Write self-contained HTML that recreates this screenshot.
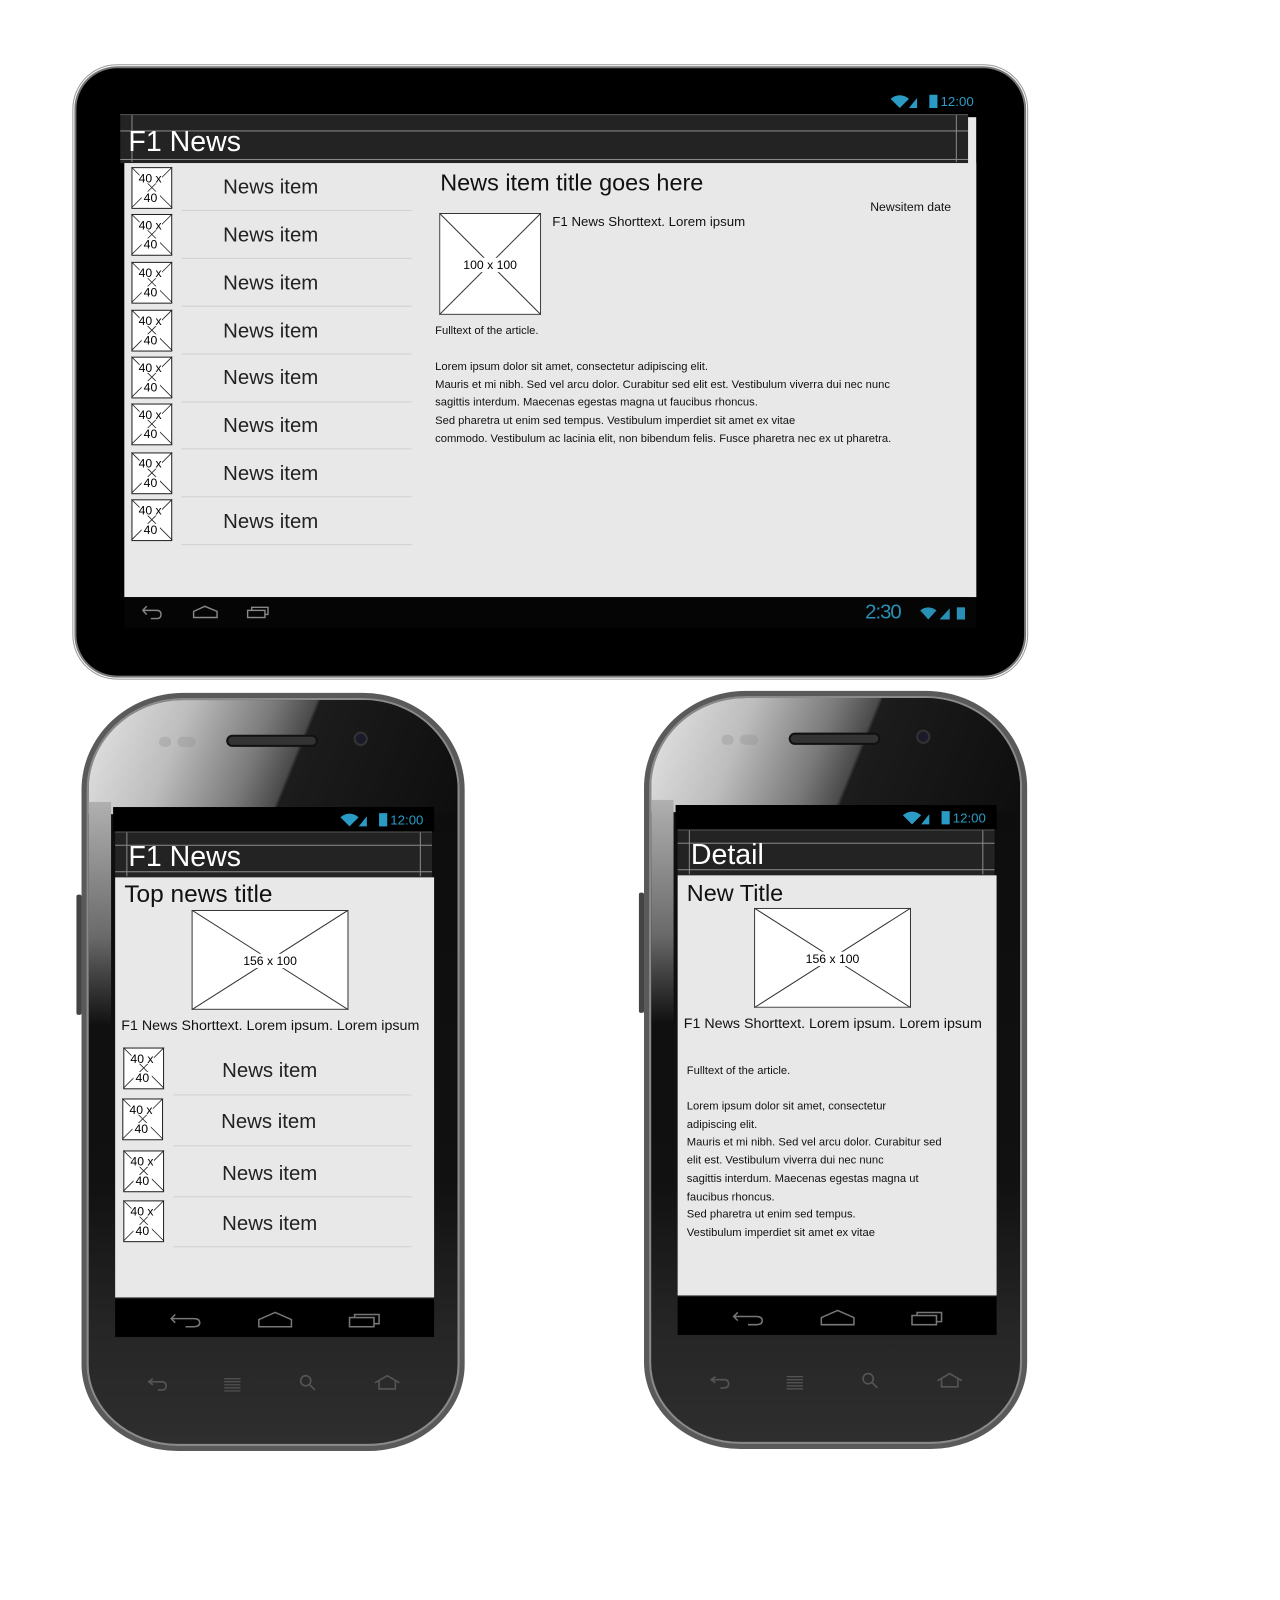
<!DOCTYPE html>
<html><head><meta charset="utf-8"><style>
*{margin:0;padding:0;box-sizing:border-box}
body{width:1280px;height:1600px;background:#fff;position:relative;overflow:hidden;font-family:"Liberation Sans",sans-serif}
#w{position:absolute;left:0;top:0;width:1260px;height:1570px;transform:scale(1.019);transform-origin:0 0}
.a{position:absolute}
.t{position:absolute;white-space:nowrap;color:#111}
.bar{background:#232323;border-top:1px solid #555}
.hl{position:absolute;height:1px;background:#8a8a8a}
.vl{position:absolute;width:1px;background:#8a8a8a}
.ni{font-size:20px;color:#222}
.sm{font-size:11px;line-height:17.7px;color:#111}
.phone{position:absolute;width:376px;height:744px;border-radius:100px 100px 95px 95px/95px 95px 85px 85px;background:#5a5a5a;}
.phone .in{position:absolute;left:5px;top:5px;right:5px;bottom:5px;border-radius:95px 95px 90px 90px/90px 90px 80px 80px;background:linear-gradient(180deg,#0c0c0c 0%,#111 65%,#262626 85%,#2e2e2e 100%);border:2px solid #8a8a8a;overflow:hidden}
.gloss{position:absolute;left:0;top:0;width:100%;height:112px;background:linear-gradient(112deg,#e6e6e6 0%,#bdbdbd 25%,#7a7a7a 45%,#4a4a4a 55%,#1c1c1c 56%,#0e0e0e 100%)}
.side{position:absolute;left:0;top:100px;width:22px;height:220px;background:linear-gradient(180deg,#b0b0b0,#6a6a6a 60%,rgba(20,20,20,0))}
</style></head><body><div id="w">

<!-- TABLET -->
<div class="a" style="left:73px;top:65px;width:934px;height:600px;border-radius:42px;background:#000;border:2px solid #777;box-shadow:0 0 0 1px #fff,0 0 0 2px #999"></div>
<div class="t" style="left:873px;top:91px;font-size:13px;color:#2a9bc5">
<svg width="50" height="16" style="vertical-align:-3px"><path d="M1 6 Q10 -1 19 6 L10 15Z" fill="#2a9bc5"/><path d="M19 15 L27 5 L27 15Z" fill="#2a9bc5"/><rect x="39" y="2" width="8" height="13" fill="#2a9bc5"/></svg>12:00</div>
<div class="a bar" style="left:118px;top:112px;width:832px;height:48px"></div>
<div class="hl" style="left:118px;top:128px;width:832px"></div>
<div class="hl" style="left:118px;top:156px;width:832px"></div>
<div class="vl" style="left:129px;top:113px;height:46px"></div>
<div class="vl" style="left:938px;top:113px;height:46px"></div>
<div class="t" style="left:126px;top:123px;font-size:28px;color:#fff">F1 News</div>
<div class="a" style="left:950px;top:115px;width:8px;height:471px;background:#e8e8e8"></div>
<div class="a" style="left:122px;top:160px;width:836px;height:426px;background:#e8e8e8"></div>
<div class="a" style="left:122px;top:586px;width:836px;height:30px;background:#050505"></div>
<svg class="a" style="left:136px;top:592px" width="130" height="18"><path d="M4 7 L8 3 M4 7 L8 11 M4 7 H18 Q22 7 22 11 Q22 15 18 15 H12" stroke="#888" fill="none" stroke-width="1.4"/><path d="M54 14 V8 L65 3 L77 8 V14Z" stroke="#888" fill="none" stroke-width="1.4"/><rect x="107" y="7" width="17" height="7" stroke="#888" fill="none" stroke-width="1.4"/><path d="M111 7 V4 H127 V11 H124" stroke="#888" fill="none" stroke-width="1.4"/></svg>
<div class="t" style="left:849px;top:590px;font-size:20px;color:#2a8fb5;letter-spacing:-1px">2:30</div>
<svg class="a" style="left:902px;top:594px" width="48" height="16"><path d="M1 5 Q9 -1 17 5 L9 14Z" fill="#2a8fb5"/><path d="M20 14 L30 3 V14Z" fill="#2a8fb5"/><rect x="37" y="2" width="8" height="12" fill="#2a8fb5"/></svg>

<div class="t" style="left:432px;top:166px;font-size:23px">News item title goes here</div>
<div class="t" style="left:854px;top:196px;font-size:12px">Newsitem date</div>
<div class="t" style="left:542px;top:210px;font-size:13px">F1 News Shorttext. Lorem ipsum</div>
<svg class="a" style="left:431px;top:209px" width="100" height="100"><rect x="0.5" y="0.5" width="99" height="99" fill="#fff" stroke="#333"/><path d="M0 0L100 100M100 0L0 100" stroke="#333"/><rect x="22" y="44" width="56" height="14" fill="#fff"/><text x="50" y="55" font-size="12" text-anchor="middle" font-family="Liberation Sans">100 x 100</text></svg>
<div class="t sm" style="left:427px;top:317px">Fulltext of the article.</div>
<div class="t sm" style="left:427px;top:352px">Lorem ipsum dolor sit amet, consectetur adipiscing elit.<br>Mauris et mi nibh. Sed vel arcu dolor. Curabitur sed elit est. Vestibulum viverra dui nec nunc<br>sagittis interdum. Maecenas egestas magna ut faucibus rhoncus.<br>Sed pharetra ut enim sed tempus. Vestibulum imperdiet sit amet ex vitae<br>commodo. Vestibulum ac lacinia elit, non bibendum felis. Fusce pharetra nec ex ut pharetra.</div>

<!-- PHONE 1 -->
<div class="phone" style="left:80px;top:680px"><div class="in"><div class="gloss"></div><div class="side"></div></div>
<div class="a" style="left:-5px;top:198px;width:5px;height:118px;background:#444;border-radius:2px"></div>
<div class="a" style="left:142px;top:41px;width:90px;height:12px;border-radius:6px;background:#333;border:2px solid #111"></div>
<div class="a" style="left:267px;top:38px;width:14px;height:14px;border-radius:7px;background:#1a1a2a;border:2px solid #333"></div>
<div class="a" style="left:76px;top:43px;width:12px;height:10px;border-radius:5px;background:rgba(150,150,150,.4)"></div>
<div class="a" style="left:94px;top:43px;width:18px;height:10px;border-radius:5px;background:rgba(150,150,150,.4)"></div>
<svg class="a" style="left:60px;top:665px" width="260" height="24"><path d="M10 8 L6 11 L10 14 M6 11 H19 Q23 11 23 15 Q23 19 19 19 H15" stroke="#555" fill="none" stroke-width="1.6"/><path d="M80 8 H96 M80 11 H96 M80 14 H96 M80 17 H96 M80 20 H96" stroke="#555" stroke-width="1.2"/><circle cx="160" cy="10" r="5" stroke="#555" fill="none" stroke-width="1.6"/><path d="M164 14 L169 19" stroke="#555" stroke-width="1.6"/><path d="M228 12 L240 5 L252 12 M232 10 V18 H248 V10" stroke="#555" fill="none" stroke-width="1.6"/></svg>
</div>
<!-- PHONE 2 -->
<div class="phone" style="left:632px;top:678px"><div class="in"><div class="gloss"></div><div class="side"></div></div>
<div class="a" style="left:-5px;top:198px;width:5px;height:118px;background:#444;border-radius:2px"></div>
<div class="a" style="left:142px;top:41px;width:90px;height:12px;border-radius:6px;background:#333;border:2px solid #111"></div>
<div class="a" style="left:267px;top:38px;width:14px;height:14px;border-radius:7px;background:#1a1a2a;border:2px solid #333"></div>
<div class="a" style="left:76px;top:43px;width:12px;height:10px;border-radius:5px;background:rgba(150,150,150,.4)"></div>
<div class="a" style="left:94px;top:43px;width:18px;height:10px;border-radius:5px;background:rgba(150,150,150,.4)"></div>
<svg class="a" style="left:60px;top:665px" width="260" height="24"><path d="M10 8 L6 11 L10 14 M6 11 H19 Q23 11 23 15 Q23 19 19 19 H15" stroke="#555" fill="none" stroke-width="1.6"/><path d="M80 8 H96 M80 11 H96 M80 14 H96 M80 17 H96 M80 20 H96" stroke="#555" stroke-width="1.2"/><circle cx="160" cy="10" r="5" stroke="#555" fill="none" stroke-width="1.6"/><path d="M164 14 L169 19" stroke="#555" stroke-width="1.6"/><path d="M228 12 L240 5 L252 12 M232 10 V18 H248 V10" stroke="#555" fill="none" stroke-width="1.6"/></svg>
</div>

<!-- phone1 screen -->
<div class="a" style="left:111px;top:792px;width:315px;height:24px;background:#000"></div>
<div class="t" style="left:333px;top:796px;font-size:13px;color:#2a9bc5"><svg width="50" height="16" style="vertical-align:-3px"><path d="M1 6 Q10 -1 19 6 L10 15Z" fill="#2a9bc5"/><path d="M19 15 L27 5 L27 15Z" fill="#2a9bc5"/><rect x="39" y="2" width="8" height="13" fill="#2a9bc5"/></svg>12:00</div>
<div class="a bar" style="left:113px;top:816px;width:311px;height:45px"></div>
<div class="hl" style="left:113px;top:829px;width:311px"></div>
<div class="hl" style="left:113px;top:855px;width:311px"></div>
<div class="vl" style="left:124px;top:817px;height:43px"></div>
<div class="vl" style="left:412px;top:817px;height:43px"></div>
<div class="t" style="left:126px;top:825px;font-size:28px;color:#fff">F1 News</div>
<div class="a" style="left:113px;top:861px;width:313px;height:412px;background:#e8e8e8"></div>
<div class="a" style="left:113px;top:1273px;width:313px;height:39px;background:#000;border-top:1px solid #888"></div>
<svg class="a" style="left:160px;top:1283px" width="220" height="22"><path d="M12 7 L8 11 L12 15 M8 11 H30 Q36 11 36 15 Q36 19 30 19 H22" stroke="#777" fill="none" stroke-width="1.5"/><path d="M94 19 V12 L110 5 L126 12 V19Z" stroke="#777" fill="none" stroke-width="1.5"/><rect x="183" y="10" width="24" height="9" stroke="#777" fill="none" stroke-width="1.5"/><path d="M188 10 V7 H212 V16 H207" stroke="#777" fill="none" stroke-width="1.5"/></svg>
<div class="t" style="left:122px;top:864px;font-size:24px">Top news title</div>
<svg class="a" style="left:188px;top:893px" width="154" height="98"><rect x="0.5" y="0.5" width="153" height="97" fill="#fff" stroke="#333"/><path d="M0 0L154 98M154 0L0 98" stroke="#333"/><rect x="48" y="43" width="58" height="14" fill="#fff"/><text x="77" y="54" font-size="12" text-anchor="middle" font-family="Liberation Sans">156 x 100</text></svg>
<div class="t" style="left:119px;top:998px;font-size:14px">F1 News Shorttext. Lorem ipsum. Lorem ipsum</div>

<!-- phone2 screen -->
<div class="a" style="left:663px;top:790px;width:315px;height:24px;background:#000"></div>
<div class="t" style="left:885px;top:794px;font-size:13px;color:#2a9bc5"><svg width="50" height="16" style="vertical-align:-3px"><path d="M1 6 Q10 -1 19 6 L10 15Z" fill="#2a9bc5"/><path d="M19 15 L27 5 L27 15Z" fill="#2a9bc5"/><rect x="39" y="2" width="8" height="13" fill="#2a9bc5"/></svg>12:00</div>
<div class="a bar" style="left:665px;top:814px;width:311px;height:45px"></div>
<div class="hl" style="left:665px;top:827px;width:311px"></div>
<div class="hl" style="left:665px;top:853px;width:311px"></div>
<div class="vl" style="left:676px;top:815px;height:43px"></div>
<div class="vl" style="left:964px;top:815px;height:43px"></div>
<div class="t" style="left:678px;top:823px;font-size:28px;color:#fff">Detail</div>
<div class="a" style="left:665px;top:859px;width:313px;height:412px;background:#e8e8e8"></div>
<div class="a" style="left:665px;top:1271px;width:313px;height:39px;background:#000;border-top:1px solid #888"></div>
<svg class="a" style="left:712px;top:1281px" width="220" height="22"><path d="M12 7 L8 11 L12 15 M8 11 H30 Q36 11 36 15 Q36 19 30 19 H22" stroke="#777" fill="none" stroke-width="1.5"/><path d="M94 19 V12 L110 5 L126 12 V19Z" stroke="#777" fill="none" stroke-width="1.5"/><rect x="183" y="10" width="24" height="9" stroke="#777" fill="none" stroke-width="1.5"/><path d="M188 10 V7 H212 V16 H207" stroke="#777" fill="none" stroke-width="1.5"/></svg>
<div class="t" style="left:674px;top:863px;font-size:23px">New Title</div>
<svg class="a" style="left:740px;top:891px" width="154" height="98"><rect x="0.5" y="0.5" width="153" height="97" fill="#fff" stroke="#333"/><path d="M0 0L154 98M154 0L0 98" stroke="#333"/><rect x="48" y="43" width="58" height="14" fill="#fff"/><text x="77" y="54" font-size="12" text-anchor="middle" font-family="Liberation Sans">156 x 100</text></svg>
<div class="t" style="left:671px;top:996px;font-size:14px">F1 News Shorttext. Lorem ipsum. Lorem ipsum</div>
<div class="t sm" style="left:674px;top:1043px">Fulltext of the article.</div>
<div class="t sm" style="left:674px;top:1078px">Lorem ipsum dolor sit amet, consectetur<br>adipiscing elit.<br>Mauris et mi nibh. Sed vel arcu dolor. Curabitur sed<br>elit est. Vestibulum viverra dui nec nunc<br>sagittis interdum. Maecenas egestas magna ut<br>faucibus rhoncus.<br>Sed pharetra ut enim sed tempus.<br>Vestibulum imperdiet sit amet ex vitae</div>

<svg class="a" style="left:0;top:0" width="1250" height="1563">
<defs><g id="ic"><rect x="0.5" y="0.5" width="39" height="40" fill="#fff" stroke="#222"/><path d="M0 0L40 40M40 0L0 40" stroke="#222" stroke-width="0.8"/><rect x="8" y="5" width="22" height="11" fill="#fff"/><rect x="10" y="24" width="18" height="12" fill="#fff"/><text x="7" y="15" font-size="12" font-family="Liberation Sans">40 x</text><text x="12" y="34" font-size="12" font-family="Liberation Sans">40</text></g></defs>
<use href="#ic" x="129" y="164"/><use href="#ic" x="129" y="210"/><use href="#ic" x="129" y="257"/><use href="#ic" x="129" y="304"/><use href="#ic" x="129" y="350"/><use href="#ic" x="129" y="396"/><use href="#ic" x="129" y="444"/><use href="#ic" x="129" y="490"/>
<use href="#ic" x="121" y="1028"/><use href="#ic" x="120" y="1078"/><use href="#ic" x="121" y="1129"/><use href="#ic" x="121" y="1178"/>
<g fill="#d0d0d0"><rect x="178" y="206" width="226" height="1"/><rect x="178" y="253" width="226" height="1"/><rect x="178" y="300" width="226" height="1"/><rect x="178" y="347" width="226" height="1"/><rect x="178" y="394" width="226" height="1"/><rect x="178" y="440" width="226" height="1"/><rect x="178" y="487" width="226" height="1"/><rect x="178" y="534" width="226" height="1"/>
<rect x="170" y="1074" width="234" height="1"/><rect x="170" y="1124" width="234" height="1"/><rect x="170" y="1174" width="234" height="1"/><rect x="170" y="1223" width="234" height="1"/></g>
</svg>
<div class="t ni" style="left:219px;top:173px">News item</div>
<div class="t ni" style="left:219px;top:220px">News item</div>
<div class="t ni" style="left:219px;top:267px">News item</div>
<div class="t ni" style="left:219px;top:314px">News item</div>
<div class="t ni" style="left:219px;top:360px">News item</div>
<div class="t ni" style="left:219px;top:407px">News item</div>
<div class="t ni" style="left:219px;top:454px">News item</div>
<div class="t ni" style="left:219px;top:501px">News item</div>
<div class="t ni" style="left:218px;top:1040px">News item</div>
<div class="t ni" style="left:217px;top:1090px">News item</div>
<div class="t ni" style="left:218px;top:1141px">News item</div>
<div class="t ni" style="left:218px;top:1190px">News item</div>
</div></body></html>
